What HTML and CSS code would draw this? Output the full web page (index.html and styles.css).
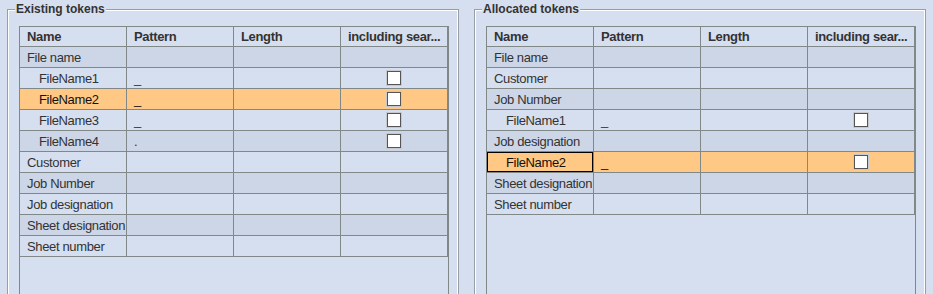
FILE: index.html
```html
<!DOCTYPE html>
<html>
<head>
    <link rel="stylesheet" href="styles.css">
</head>
<body>
    <div class="panels">
        <!-- Existing tokens -->
        <fieldset class="group">
            <legend>Existing tokens</legend>
            <div class="scroll">
                <table class="tokens">
                    <thead>
                        <tr><th>Name</th><th>Pattern</th><th>Length</th><th>including sear...</th></tr>
                    </thead>
                    <tbody>
                        <tr><td>File name</td><td></td><td></td><td></td></tr>
                        <tr><td class="child">FileName1</td><td>_</td><td></td><td class="box"><input class="check" type="checkbox"></td></tr>
                        <tr class="selected"><td class="child">FileName2</td><td>_</td><td></td><td class="box"><input class="check" type="checkbox"></td></tr>
                        <tr><td class="child">FileName3</td><td>_</td><td></td><td class="box"><input class="check" type="checkbox"></td></tr>
                        <tr><td class="child">FileName4</td><td>.</td><td></td><td class="box"><input class="check" type="checkbox"></td></tr>
                        <tr><td>Customer</td><td></td><td></td><td></td></tr>
                        <tr><td>Job Number</td><td></td><td></td><td></td></tr>
                        <tr><td>Job designation</td><td></td><td></td><td></td></tr>
                        <tr><td>Sheet designation</td><td></td><td></td><td></td></tr>
                        <tr><td>Sheet number</td><td></td><td></td><td></td></tr>
                    </tbody>
                </table>
            </div>
        </fieldset>

        <!-- Allocated tokens -->
        <fieldset class="group">
            <legend>Allocated tokens</legend>
            <div class="scroll">
                <table class="tokens">
                    <thead>
                        <tr><th>Name</th><th>Pattern</th><th>Length</th><th>including sear...</th></tr>
                    </thead>
                    <tbody>
                        <tr><td>File name</td><td></td><td></td><td></td></tr>
                        <tr><td>Customer</td><td></td><td></td><td></td></tr>
                        <tr><td>Job Number</td><td></td><td></td><td></td></tr>
                        <tr><td class="child">FileName1</td><td>_</td><td></td><td class="box"><input class="check" type="checkbox"></td></tr>
                        <tr><td>Job designation</td><td></td><td></td><td></td></tr>
                        <tr class="selected"><td class="child focus">FileName2</td><td>_</td><td></td><td class="box"><input class="check" type="checkbox"></td></tr>
                        <tr><td>Sheet designation</td><td></td><td></td><td></td></tr>
                        <tr><td>Sheet number</td><td></td><td></td><td></td></tr>
                    </tbody>
                </table>
            </div>
        </fieldset>
    </div>
</body>
</html>
```

FILE: styles.css
```css
body {
    margin: 0;
    height: 294px;
    overflow: hidden;
    background-color: #d6dfef;
    font-family: "Liberation Sans", Arial, sans-serif;
    font-size: 12px;
    color: #333;
}

.panels {
    display: flex;
    gap: 15px;
    padding-left: 7px;
}

/* Etched titled border */
.group {
    box-sizing: border-box;
    width: 452px;
    height: 340px;
    margin: 0;
    padding: 7px 9px 0 11px;
    border: 1px solid #989ea6;
    box-shadow: inset 1px 1px 0 #fff, inset -1px 0 0 #fff;
}

.group legend {
    margin-left: -4px;
    padding: 0 1px;
    line-height: 19px;
    font-weight: bold;
    color: #333;
    background-color: #d6dfef;
}

.scroll {
    box-sizing: border-box;
    width: 430px;
    height: 320px;
    border: 1px solid #808888;
}

/* Token table */
.tokens {
    table-layout: fixed;
    width: 428px;
    border-spacing: 0;
    font-size: 13px;
    letter-spacing: -0.35px;
}

.tokens th,
.tokens td {
    box-sizing: border-box;
    width: 107px;
    padding: 1px 7px 0;
    border-right: 1px solid #808888;
    border-bottom: 1px solid #808888;
    white-space: nowrap;
    overflow: hidden;
    text-align: left;
}

.tokens th {
    line-height: 18px;
    font-weight: bold;
}

.tokens td {
    line-height: 19px;
}

.tokens tbody tr:nth-child(odd) td {
    background-color: #ccd6e7;
}

.tokens tbody tr.selected td {
    background-color: #ffc885;
    color: #111;
}

.tokens td.child {
    padding-left: 19px;
}

.tokens td.focus {
    box-shadow: inset 0 0 0 1px #000;
}

.tokens td.box {
    padding-top: 0;
    line-height: 20px;
    text-align: center;
}

.check {
    appearance: none;
    box-sizing: border-box;
    width: 14px;
    height: 14px;
    margin: 3px 0 0 -1px;
    vertical-align: top;
    border: 1px solid #555;
    background-color: #fff;
    box-shadow: 0 0 0 1px #c6cacf;
}
```
